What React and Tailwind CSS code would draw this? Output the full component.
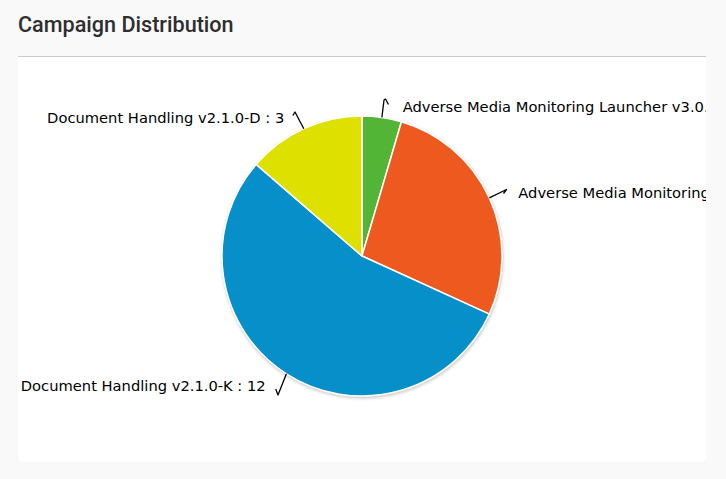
import React from 'react';

const CX = 344;
const CY = 199;
const R = 140;

const slices = [
  { label: 'Adverse Media Monitoring Launcher v3.0.2 : 1', value: 1, color: '#53b536' },
  { label: 'Adverse Media Monitoring v3.0.1 : 6', value: 6, color: '#ee591f' },
  { label: 'Document Handling v2.1.0-K : 12', value: 12, color: '#068fc8' },
  { label: 'Document Handling v2.1.0-D : 3', value: 3, color: '#dee000' },
];

// label placement and connector lines, in chart coords
const labels = [
  { x: 384.7, y: 54.7, anchor: 'start', line: '363.9,60.4 366,43 367.5,42 370.5,47.5' },
  { x: 500.3, y: 141.3, anchor: 'start', line: '471.3,140.8 488.5,132.5 485.5,136.5' },
  { x: 247.7, y: 333.7, anchor: 'end', line: '268.4,316.8 260,338 257.7,332' },
  { x: 266.3, y: 66, anchor: 'end', line: '285.8,71.7 277,55 274.8,58.5' },
];

function point(deg) {
  const a = (deg * Math.PI) / 180;
  return [CX + R * Math.sin(a), CY - R * Math.cos(a)];
}

function slicePath(start, end) {
  const [x1, y1] = point(start);
  const [x2, y2] = point(end);
  const large = end - start > 180 ? 1 : 0;
  return `M${CX},${CY} L${x1},${y1} A${R},${R} 0 ${large} 1 ${x2},${y2} Z`;
}

function PieChart() {
  const total = slices.reduce((s, d) => s + d.value, 0);
  let acc = 0;
  const arcs = slices.map((d) => {
    const start = (acc / total) * 360;
    acc += d.value;
    const end = (acc / total) * 360;
    return { ...d, start, end };
  });

  return (
    <svg width="688" height="405" viewBox="0 0 688 405" className="block">
      <defs>
        <filter id="pie-shadow" x="-10%" y="-10%" width="120%" height="120%">
          <feGaussianBlur stdDeviation="1.6" />
        </filter>
      </defs>
      <circle cx={CX + 0.5} cy={CY + 1.5} r={R + 1} fill="#000" opacity="0.2" filter="url(#pie-shadow)" />
      {arcs.map((a) => (
        <path key={a.label} d={slicePath(a.start, a.end)} fill={a.color} stroke="#fff" strokeWidth="1.5" strokeLinejoin="round" />
      ))}
      {labels.map((l, i) => (
        <g key={i}>
          <polyline points={l.line} fill="none" stroke="#000" strokeWidth="1.3" strokeLinejoin="round" />
          <text
            x={l.x}
            y={l.y}
            textAnchor={l.anchor}
            fill="#000"
            style={{ fontFamily: '"DejaVu Sans", Verdana, sans-serif', fontSize: '14.7px' }}
          >
            {slices[i].label}
          </text>
        </g>
      ))}
    </svg>
  );
}

export default function App() {
  return (
    <div className="w-[726px] h-[479px] bg-[#f9f9f9] overflow-hidden">
      <div className="ml-[18px] w-[688px]">
        <div className="h-[57px] border-b border-[#c9c9c9] pt-[14px]">
          <h2 className="text-[21.6px] leading-[22px] font-medium text-[#2e2e2e] font-['Roboto',sans-serif]">
            Campaign Distribution
          </h2>
        </div>
        <div className="h-[405px] bg-white rounded-b-[6px] overflow-hidden">
          <PieChart />
        </div>
      </div>
    </div>
  );
}
